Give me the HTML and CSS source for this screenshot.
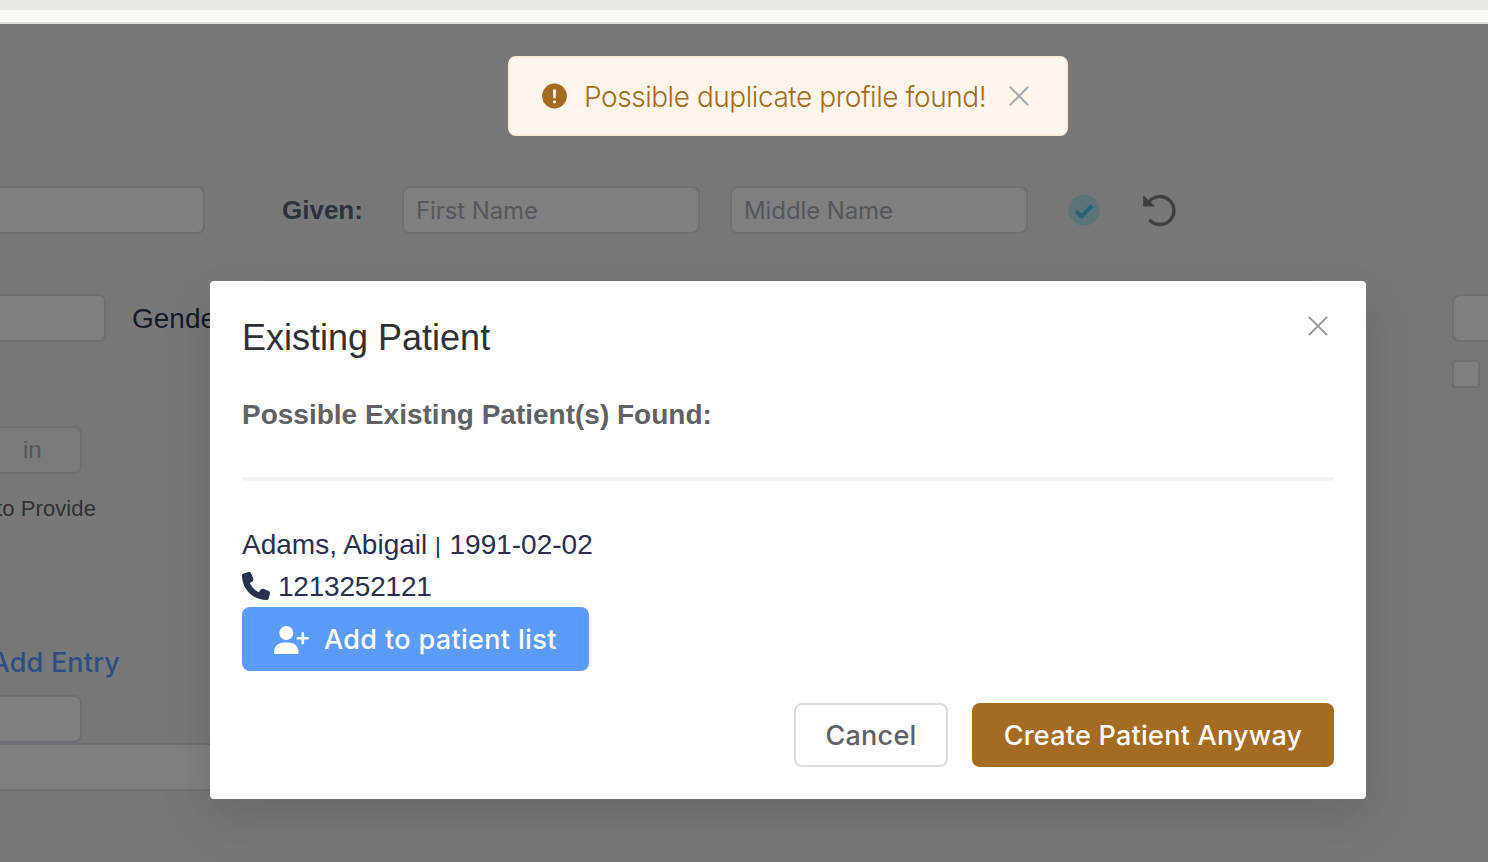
FILE: index.html
```html
<!DOCTYPE html>
<html lang="en">
<head>
<meta charset="utf-8">
<title>Patient profile</title>
<link rel="stylesheet" href="styles.css">
</head>
<body>
<div class="chrome"></div>
<main class="page">
  <div class="row name-row">
    <div class="input family"></div>
    <label class="given">Given:</label>
    <div class="input name"><span class="ph first">First Name</span></div>
    <div class="input name"><span class="ph middle">Middle Name</span></div>
    <svg class="check" viewBox="0 0 32 32"><circle cx="16" cy="16" r="15.4" fill="#5c7378"/><path d="M8 17.2l5.4 5.4L24 11.700" fill="none" stroke="#28606f" stroke-width="4" stroke-linecap="butt" stroke-linejoin="round"/></svg>
    <svg class="undo" viewBox="0 0 34 34"><path d="M7.200 8.600A14 14 0 1 1 8.400 27.800" fill="none" stroke="#404040" stroke-width="3.400" stroke-linecap="round"/><path d="M1.700 3v10h10.600z" fill="#404040" stroke="#404040" stroke-width="1" stroke-linejoin="round"/></svg>
  </div>
  <div class="row gender-row">
    <div class="input birth"></div>
    <label class="gender">Gender</label>
    <div class="side"><div class="input side-input"></div><div class="checkbox"></div></div>
  </div>
  <div class="input unit"><span>in</span></div>
  <div class="provide"><span>to Provide</span></div>
  <div class="entry"><span>Add Entry</span></div>
  <div class="input short"></div>
  <div class="input wide"></div>
</main>

<section class="dialog">
  <header class="dialog-head">
    <h1>Existing Patient</h1>
    <svg class="close" viewBox="0 0 20 20"><path d="M.8.8l18.400 18.400M19.200.8L.8 19.200" stroke="#909399" stroke-width="1.800" fill="none"/></svg>
  </header>
  <h2>Possible Existing Patient(s) Found:</h2>
  <hr>
  <div class="patient">
    <p class="person">Adams, Abigail <span class="bar">|</span> 1991-02-02</p>
    <p class="phone"><svg viewBox="0 0 512 512"><path fill="#29304d" d="M164.900 24.600c-7.700-18.600-28-28.500-47.400-23.200l-88 24C12.100 30.200 0 46 0 64c0 247.400 200.600 448 448 448 18 0 33.800-12.100 38.600-29.500l24-88c5.300-19.400-4.600-39.700-23.200-47.400l-96-40c-16.300-6.800-35.200-2.100-46.300 11.600L304.700 368C234.300 334.700 177.300 277.700 144 207.300L193.300 167c13.700-11.200 18.400-30 11.600-46.300l-40-96z"/></svg><span>1213252121</span></p>
    <button class="btn add"><svg viewBox="0 0 36 28"><circle cx="12.300" cy="7" r="7" fill="#fff"/><path d="M0 26.500C0 20.300 4.400 16.500 9.700 16.500h5.200c5.300 0 9.700 3.800 9.700 10 0 .9-.6 1.500-1.500 1.500H1.500C.6 28 0 27.400 0 26.500z" fill="#fff"/><path d="M28.800 7.300v10M23.800 12.300h10" stroke="#fff" stroke-width="2.600" stroke-linecap="round"/></svg><span>Add to patient list</span></button>
  </div>
  <footer class="actions">
    <button class="btn cancel"><span>Cancel</span></button>
    <button class="btn create"><span>Create Patient Anyway</span></button>
  </footer>
</section>

<div class="toast">
  <svg class="warn" viewBox="0 0 26 26"><circle cx="12.500" cy="13" r="12.400" fill="#a56b22"/><path d="M10.900 6.400h3.200l-.5 8.800h-2.200z" fill="#fef6ec"/><circle cx="12.500" cy="18.800" r="1.600" fill="#fef6ec"/></svg>
  <span class="msg">Possible duplicate profile found!</span>
  <svg class="dismiss" viewBox="0 0 20 20"><path d="M.8.8l18.400 18.400M19.200.8L.8 19.200" stroke="#a8abb2" stroke-width="2" fill="none"/></svg>
</div>
</body>
</html>
```
FILE: styles.css
```css
* { box-sizing: border-box; }
body {
  margin: 0;
  width: 1488px;
  height: 862px;
  overflow: hidden;
  position: relative;
  background: #787878;
  font-family: "Liberation Sans", Arial, sans-serif;
}
.chrome {
  height: 24px;
  background: #faf9f5;
  border-top: 10px solid #e9eae3;
  border-bottom: 2px solid #dfe0da;
}
.page { padding-top: 162px; }
.row { display: flex; }
.input {
  height: 48px;
  background: #808080;
  border: 2px solid #6f6f74;
  border-radius: 8px;
  display: flex;
  align-items: center;
}
.family, .birth, .unit, .short, .wide {
  border-left: 0;
  border-top-left-radius: 0;
  border-bottom-left-radius: 0;
}
.name-row { align-items: center; height: 48px; }
.family { width: 205px; }
.given {
  width: 120px;
  margin-left: 77px;
  font-size: 26px;
  font-weight: 700;
  color: #2e313e;
}
.name { width: 298px; padding-left: 12px; }
.name + .name { margin-left: 30px; }
.ph {
  font-family: Inter, sans-serif;
  font-size: 24px;
  letter-spacing: -.1px;
  color: #56575b;
  white-space: nowrap;
}
.check { width: 32px; height: 32px; margin-left: 40px; }
.undo { width: 34px; height: 34px; margin: -1px 0 0 42px; }
.gender-row { margin-top: 60px; height: 94px; }
.birth { width: 106px; }
.gender {
  margin-left: 26px;
  line-height: 50px;
  font-size: 28px;
  color: #171a2b;
}
.side { width: 36px; margin-left: auto; }
.side-input { border-right: 0; border-radius: 8px 0 0 8px; }
.checkbox {
  width: 28px;
  height: 28px;
  margin-top: 18px;
  background: #808080;
  border: 2px solid #6f6f74;
  border-radius: 4px;
}
.unit {
  width: 82px;
  margin-top: 38px;
  padding-left: 23px;
  background: #7a7b7d;
  font-size: 24px;
  color: #55565a;
}
.provide, .entry {
  display: flex;
  justify-content: flex-end;
  overflow: hidden;
  white-space: nowrap;
}
.provide {
  width: 96px;
  margin-top: 20px;
  line-height: 30px;
  font-size: 22px;
  letter-spacing: .1px;
  color: #303133;
}
.entry {
  width: 120px;
  margin-top: 121px;
  height: 34px;
  line-height: 35px;
  font-family: Inter, sans-serif;
  font-size: 27px;
  letter-spacing: .2px;
  font-weight: 500;
  color: #2d4e80;
}
.short { width: 82px; margin-top: 16px; }
.wide { width: 700px; }

.dialog {
  position: absolute;
  left: 210px;
  top: 281px;
  width: 1156px;
  height: 518px;
  padding: 32px;
  background: #fff;
  border-radius: 4px;
  box-shadow: 0 24px 64px 8px rgba(0, 0, 0, .04), 0 16px 40px rgba(0, 0, 0, .08);
}
.dialog-head {
  display: flex;
  justify-content: space-between;
  height: 48px;
}
h1, h2, p, hr { margin: 0; }
h1 {
  font-size: 36px;
  line-height: 50px;
  font-weight: 400;
  color: #303133;
}
.close { width: 20px; height: 20px; margin: 3px 6px 0 0; }
h2 {
  height: 42px;
  margin-top: 32px;
  font-size: 28px;
  line-height: 44px;
  color: #606266;
}
hr {
  height: 4px;
  margin-top: 42px;
  border: 0;
  background: #f4f4f4;
}
.patient {
  margin-top: 42px;
  font-size: 28px;
  line-height: 44px;
  color: #29304d;
}
.person, .phone { height: 42px; }
.bar {
  padding-right: 1px;
  font-size: 22px;
  line-height: 1;
  vertical-align: 1px;
}
.phone { display: flex; gap: 8px; letter-spacing: -.2px; }
.phone svg { width: 28px; height: 28px; margin-top: 7px; }
.btn {
  display: flex;
  align-items: center;
  justify-content: center;
  height: 64px;
  padding: 1px 0 0;
  border: 0;
  border-radius: 8px;
  font-family: Inter, sans-serif;
  font-size: 27px;
  font-weight: 500;
  letter-spacing: .25px;
  color: #fff;
  white-space: nowrap;
}
.add {
  width: 347px;
  justify-content: flex-start;
  padding-left: 32px;
  gap: 14px;
  letter-spacing: .35px;
  background: #5b9bfa;
}
.add svg { width: 36px; height: 28px; }
.actions {
  display: flex;
  justify-content: flex-end;
  gap: 24px;
  margin-top: 32px;
}
.cancel {
  width: 154px;
  background: #fff;
  border: 2px solid #dcdce4;
  color: #606266;
}
.create { width: 362px; background: #a56b22; }

.toast {
  position: absolute;
  left: 508px;
  top: 56px;
  width: 560px;
  height: 80px;
  padding-left: 32px;
  display: flex;
  align-items: center;
  background: #fef6ec;
  border: 2px solid #faecd8;
  border-radius: 8px;
}
.warn { width: 26px; height: 26px; flex: none; }
.msg {
  width: 441px;
  padding: 2px 0 0 16px;
  font-family: Inter, sans-serif;
  font-size: 28px;
  font-weight: 300;
  letter-spacing: -.45px;
  color: #a56b22;
  white-space: nowrap;
}
.dismiss { width: 20px; height: 20px; flex: none; }
```
